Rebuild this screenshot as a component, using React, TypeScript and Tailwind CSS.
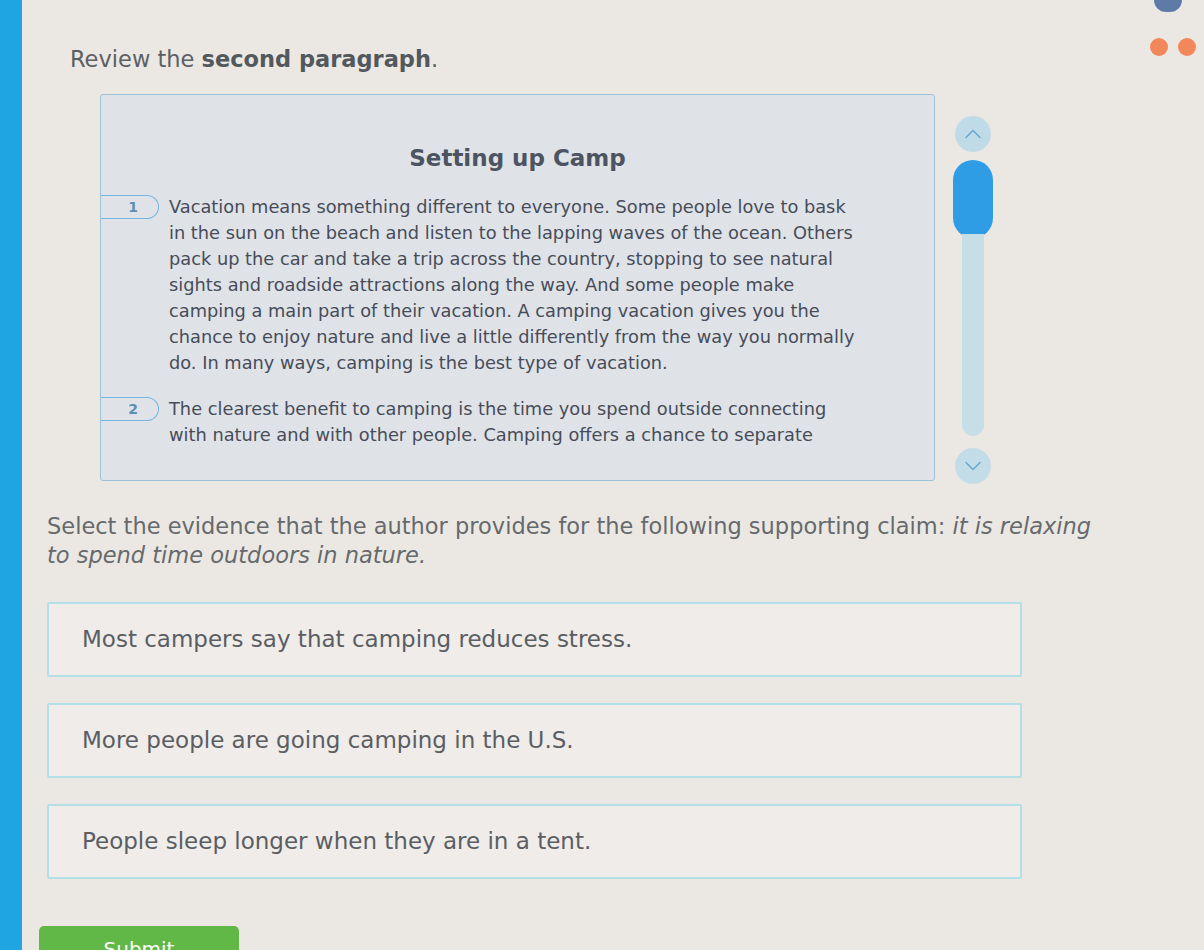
import React from 'react';

const font = { fontFamily: '"DejaVu Sans", Verdana, sans-serif' };

const paragraphs = [
  [
    'Vacation means something different to everyone. Some people love to bask',
    'in the sun on the beach and listen to the lapping waves of the ocean. Others',
    'pack up the car and take a trip across the country, stopping to see natural',
    'sights and roadside attractions along the way. And some people make',
    'camping a main part of their vacation. A camping vacation gives you the',
    'chance to enjoy nature and live a little differently from the way you normally',
    'do. In many ways, camping is the best type of vacation.',
  ],
  [
    'The clearest benefit to camping is the time you spend outside connecting',
    'with nature and with other people. Camping offers a chance to separate',
  ],
];

const answers = [
  'Most campers say that camping reduces stress.',
  'More people are going camping in the U.S.',
  'People sleep longer when they are in a tent.',
];

const Chevron: React.FC<{ up?: boolean }> = ({ up }) => (
  <svg width="18" height="10" viewBox="0 0 18 10" fill="none" stroke="#6aa9cf" strokeWidth="1.6" strokeLinecap="round" strokeLinejoin="round">
    {up ? <path d="M2 8.5 9 1.5l7 7" /> : <path d="M2 1.5 9 8.5l7-7" />}
  </svg>
);

const App: React.FC = () => {
  return (
    <div className="flex h-[950px] w-[1204px] overflow-hidden bg-[#ebe8e4]" style={font}>
      <div className="w-[22px] shrink-0 bg-[#1ea5e2]" />
      <div className="relative flex-1 pl-[25px]">
        <div className="absolute right-[8px] top-[38px] flex gap-[10px]">
          <span className="h-[18px] w-[18px] rounded-full bg-[#f2885a]" />
          <span className="h-[18px] w-[18px] rounded-full bg-[#f2885a]" />
        </div>
        <div className="absolute right-[22px] top-[-12px] h-[24px] w-[28px] rounded-full bg-[#5d7ba6]" />

        <p className="pl-[23px] pt-[44px] text-[22.5px] leading-[30px] text-[#5c5f63]">
          Review the <span className="font-bold text-[#52585c]">second paragraph</span>.
        </p>

        <div className="ml-[53px] mt-[20px] flex gap-[18px]">
          <div className="h-[387px] w-[835px] overflow-hidden rounded-[3px] border border-[#9cc2da] bg-[#dfe3e8]">
            <h2 className="pt-[48px] text-center text-[23px] font-bold leading-[30px] text-[#4d5461]">Setting up Camp</h2>
            <div className="mt-[21px] flex flex-col gap-[20px]">
              {paragraphs.map((lines, i) => (
                <div key={i} className="flex items-start">
                  <span className="mt-[1px] flex h-[24px] w-[58px] shrink-0 items-center justify-end rounded-r-full border border-l-0 border-[#70b6de] pr-[20px] text-[14px] font-bold text-[#5b8fb3]">
                    {i + 1}
                  </span>
                  <p className="ml-[10px] whitespace-nowrap text-[17.8px] leading-[26px] text-[#474c58]">
                    {lines.map((l, j) => (
                      <span key={j} className="block">{l}</span>
                    ))}
                  </p>
                </div>
              ))}
            </div>
          </div>
          <div className="flex w-[40px] flex-col items-center pt-[22px]">
            <div className="flex h-[36px] w-[36px] items-center justify-center rounded-full bg-[#bfdbe8]">
              <Chevron up />
            </div>
            <div className="mt-[8px] flex h-[276px] w-[40px] flex-col items-center">
              <div className="h-[78px] w-[40px] rounded-full bg-[#2f9ce6]" />
              <div className="-mt-[4px] w-[22px] flex-1 rounded-b-full bg-[#c6dfe7]" />
            </div>
            <div className="mt-[12px] flex h-[36px] w-[36px] items-center justify-center rounded-full bg-[#c3dde8]">
              <Chevron />
            </div>
          </div>
        </div>

        <p className="mt-[28px] whitespace-nowrap text-[22.5px] leading-[29px] text-[#666a6c]">
          Select the evidence that the author provides for the following supporting claim: <i>it is relaxing</i>
          <br />
          <i>to spend time outdoors in nature.</i>
        </p>

        <div className="mt-[32px] flex w-[975px] flex-col gap-[26px]">
          {answers.map((a) => (
            <div key={a} className="flex h-[75px] items-center rounded-[2px] border-2 border-[#b3dfe6] bg-[#efecea] pl-[33px]">
              <span className="text-[23px] text-[#5a5e62]">{a}</span>
            </div>
          ))}
        </div>

        <button className="-ml-[8px] mt-[47px] flex h-[46px] w-[200px] items-start justify-center rounded-[5px] bg-[#62b846] pt-[8px] text-[20px] text-white">
          Submit
        </button>
      </div>
    </div>
  );
};

export default App;
